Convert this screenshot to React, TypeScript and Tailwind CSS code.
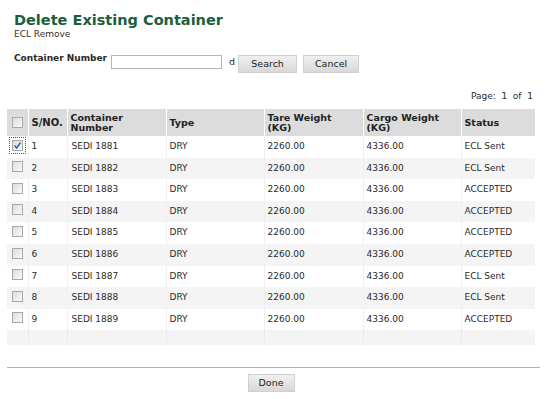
import React from 'react';

const rows = [
  { no: 1, id: 'SEDI 1881', status: 'ECL Sent', checked: true },
  { no: 2, id: 'SEDI 1882', status: 'ECL Sent' },
  { no: 3, id: 'SEDI 1883', status: 'ACCEPTED' },
  { no: 4, id: 'SEDI 1884', status: 'ACCEPTED' },
  { no: 5, id: 'SEDI 1885', status: 'ACCEPTED' },
  { no: 6, id: 'SEDI 1886', status: 'ACCEPTED' },
  { no: 7, id: 'SEDI 1887', status: 'ECL Sent' },
  { no: 8, id: 'SEDI 1888', status: 'ECL Sent' },
  { no: 9, id: 'SEDI 1889', status: 'ACCEPTED' },
];

const CheckBox = ({ checked = false }: { checked?: boolean }) => (
  <span
    className={
      'inline-flex items-center justify-center w-[13px] h-[13px] ' +
      (checked ? 'outline outline-1 outline-dotted outline-[#555] outline-offset-[1px]' : '')
    }
  >
    <span className="flex items-center justify-center w-[11px] h-[11px] border border-[#a9a9a9] bg-gradient-to-br from-[#dcdcdc] to-[#fafafa]">
      {checked && (
        <svg width="9" height="9" viewBox="0 0 9 9">
          <path d="M1.5 4.5 L3.6 7 L7.5 1.5" fill="none" stroke="#3d5fb8" strokeWidth="1.5" />
        </svg>
      )}
    </span>
  </span>
);

const Button = ({ label, w }: { label: string; w: string }) => (
  <button
    className={
      'h-[18px] ' + w +
      ' bg-gradient-to-b from-[#f0f0f0] to-[#d8d8d8] border border-[#d0d0d0] text-[9.5px] text-[#222]'
    }
  >
    {label}
  </button>
);

export default function App() {
  return (
    <div className="w-[556px] h-[399px] bg-white text-[#2a2a2a] font-['DejaVu_Sans',Verdana,sans-serif] overflow-hidden">
      {/* Header */}
      <div className="pl-[14px] pt-[11px]">
        <h1 className="text-[14.5px] font-bold leading-[18px] text-[#1b5e3b]">Delete Existing Container</h1>
        <p className="text-[9px] leading-[11px] text-[#333]">ECL Remove</p>
      </div>

      {/* Search */}
      <div className="flex items-center pl-[14px] mt-[13px] h-[18px]">
        <span className="text-[9px] font-bold self-start -mt-[1px]">Container Number</span>
        <input className="ml-[4px] w-[111px] h-[14px] border border-[#b5b5b5] bg-white" />
        <span className="ml-[7px] text-[9.5px]">d</span>
        <span className="ml-[3px]"><Button label="Search" w="w-[59px]" /></span>
        <span className="ml-[6px]"><Button label="Cancel" w="w-[56px]" /></span>
      </div>

      <div className="flex justify-end pr-[23px] mt-[20px] text-[9px] leading-[11px]">Page:&nbsp;&nbsp;1&nbsp;&nbsp;of&nbsp;&nbsp;1</div>

      {/* Table */}
      <table className="ml-[7px] mt-[7px] w-[528px] border-collapse table-fixed text-[9px]">
        <colgroup>
          <col className="w-[21px]" />
          <col className="w-[39px]" />
          <col className="w-[99px]" />
          <col className="w-[98px]" />
          <col className="w-[99px]" />
          <col className="w-[98px]" />
          <col className="w-[74px]" />
        </colgroup>
        <thead>
          <tr className="bg-[#dcdcdc] h-[27px] text-left font-bold text-[9.5px] leading-[10px] text-[#222]">
            <th className="border-r border-white pl-[4px]"><CheckBox /></th>
            <th className="border-r border-white pl-[3px] text-[10px]">S/NO.</th>
            <th className="border-r border-white pl-[3px] pt-[1px]">Container<br />Number</th>
            <th className="border-r border-white pl-[3px]">Type</th>
            <th className="border-r border-white pl-[3px]">Tare Weight<br />(KG)</th>
            <th className="border-r border-white pl-[3px]">Cargo Weight<br />(KG)</th>
            <th className="pl-[3px]">Status</th>
          </tr>
        </thead>
        <tbody>
          {rows.map((r, i) => (
            <tr key={r.no} className={(i % 2 === 1 ? 'bg-[#f4f4f4]' : 'bg-white') + ' h-[21.6px]'}>
              <td className="pl-[4px] border-r border-[#f0f0f0]"><CheckBox checked={r.checked} /></td>
              <td className="pl-[3px] border-r border-[#f0f0f0]">{r.no}</td>
              <td className="pl-[4px] border-r border-[#f0f0f0]">{r.id}</td>
              <td className="pl-[3px] border-r border-[#f0f0f0]">DRY</td>
              <td className="pl-[3px] border-r border-[#f0f0f0]">2260.00</td>
              <td className="pl-[3px] border-r border-[#f0f0f0]">4336.00</td>
              <td className="pl-[3px]">{r.status}</td>
            </tr>
          ))}
          <tr className="bg-[#f4f4f4] h-[15px]">
            <td className="border-r border-[#ebebeb]" />
            <td className="border-r border-[#ebebeb]" />
            <td className="border-r border-[#ebebeb]" />
            <td className="border-r border-[#ebebeb]" />
            <td className="border-r border-[#ebebeb]" />
            <td className="border-r border-[#ebebeb]" />
            <td />
          </tr>
        </tbody>
      </table>

      <div className="ml-[7px] mt-[22px] w-[533px] border-t border-[#b0b0b0]" />

      <div className="flex justify-center pr-[14px] mt-[6px]">
        <Button label="Done" w="w-[47px]" />
      </div>
    </div>
  );
}
